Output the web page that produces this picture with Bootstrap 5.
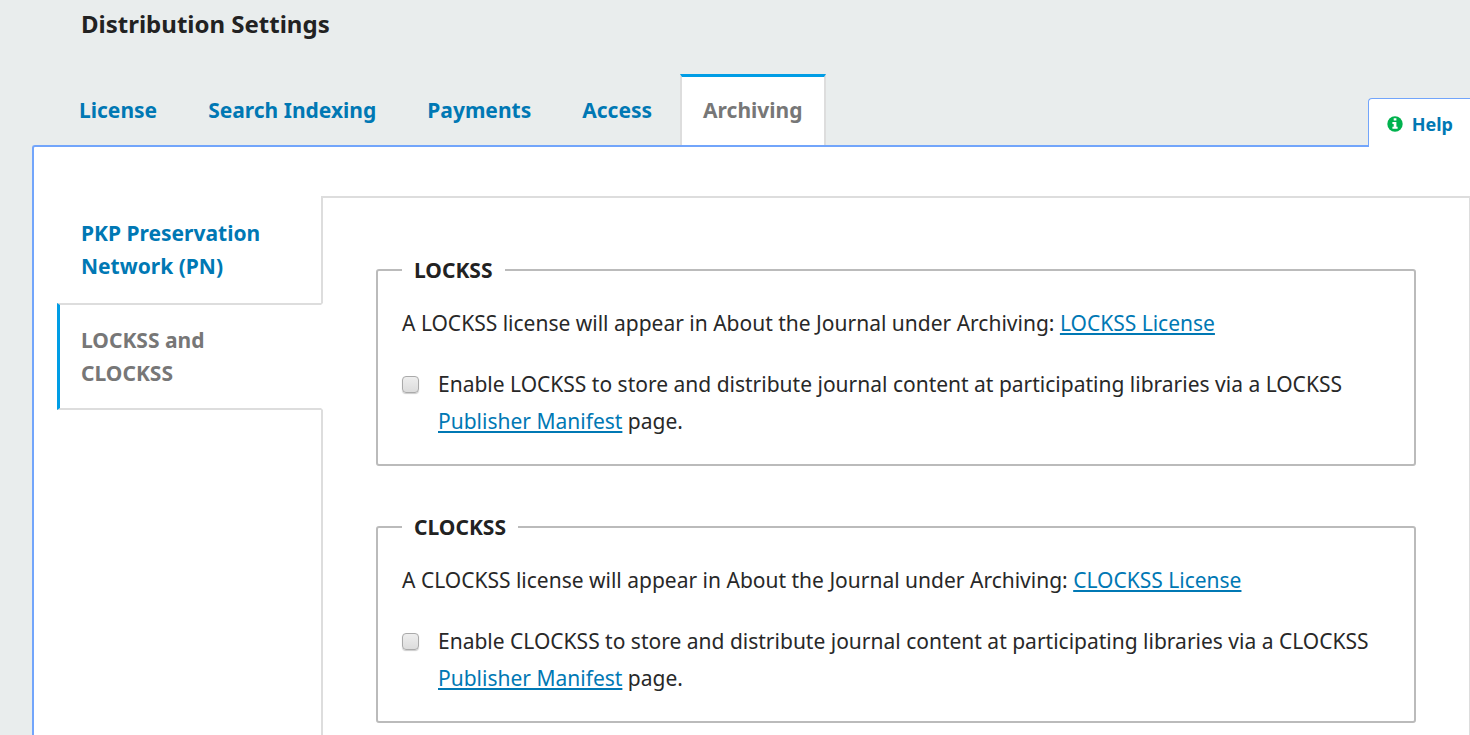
<!DOCTYPE html>
<html lang="en">
<head>
<meta charset="utf-8">
<meta name="viewport" content="width=device-width, initial-scale=1">
<title>Distribution Settings</title>
<link href="https://cdn.jsdelivr.net/npm/bootstrap@5.3.0/dist/css/bootstrap.min.css" rel="stylesheet">
<style>
  body { background: #e9eded; color: #282828; font-family: "Noto Sans", sans-serif; font-size: 21px; line-height: 37px; }
  a { color: #0078b4; text-decoration-thickness: 2px; text-underline-offset: 2px; }
  .page-title { color: #222; font-size: 24px; line-height: 32px; padding: 8px 0 0 81px; }
  .tab-row { padding: 34px 0 0 56px; }
  .tab-row .nav-tabs { --bs-nav-tabs-border-width: 0; gap: 5px; }
  .tab-row .nav-link { border: 2px solid transparent; border-top-width: 3px; border-bottom: 0; border-radius: 0; padding: 15px 21px 16px; margin: 0; font-weight: 700; color: #0078b4; }
  .tab-row .nav-link.active { background: #fff; border-color: #009de5 #ddd; color: #777; }
  .help-tab { background: #fff; border: 1px solid #72a5fb; border-width: 1px 0 0 1px; border-radius: 4px 0 0 0; color: #0078b4; font-size: 18px; line-height: 24px; font-weight: 700; padding: 13px 17px 11px; margin-bottom: -2px; z-index: 1; }
  .settings-panel { background: #fff; border: 2px solid #72a5fb; border-width: 2px 0 0 2px; border-top-left-radius: 3px; margin-left: 32px; padding: 49px 0 0 23px; }
  .side-tabs { width: 266px; flex: none; z-index: 1; }
  .side-tabs .nav-link { border: 2px solid transparent; border-left-width: 3px; border-right: 2px solid #ddd; border-radius: 0; color: #0078b4; font-weight: 700; line-height: 33px; padding: 19px 40px 18px 21px; }
  .side-tabs .nav-link.active { background: #fff; border-color: #ddd #fff #ddd #009de5; color: #777; }
  .archive-content { border: 2px solid #ddd; border-width: 2px 1px 0 2px; margin-left: -2px; padding: 56px 53px 8px; }
  .setting-group { border: 2px solid #bbb; border-radius: 3px; padding: 0 24px 24px; }
  .setting-group + .setting-group { margin-top: 45px; }
  .setting-group legend { color: #222; font-size: 21px; font-weight: 700; line-height: 32px; padding: 0 12px; margin-bottom: 19px; }
  .setting-group p { margin-bottom: 24px; }
  .enable-box { appearance: none; flex: none; width: 17px; height: 17px; margin: 10px 19px 0 0; border: 1px solid #aaa; border-radius: 4px; background: linear-gradient(#eee, #dcdcdc); box-shadow: 0 1px 1px #ccc; }
  .enable-box:checked { background: #0078b4; }
</style>
</head>
<body class="min-vh-100 d-flex flex-column">
<h1 class="page-title fw-bold m-0">Distribution Settings</h1>
<div class="tab-row d-flex justify-content-between align-items-end">
  <ul class="nav nav-tabs">
    <li class="nav-item"><a class="nav-link" href="#license">License</a></li>
    <li class="nav-item"><a class="nav-link" href="#indexing">Search Indexing</a></li>
    <li class="nav-item"><a class="nav-link" href="#payments">Payments</a></li>
    <li class="nav-item"><a class="nav-link" href="#access">Access</a></li>
    <li class="nav-item"><a class="nav-link active" aria-current="page" href="#archiving">Archiving</a></li>
  </ul>
  <button type="button" class="help-tab d-flex align-items-center position-relative">
    <svg class="me-2" width="18" height="16" viewBox="0 0 18 16" aria-hidden="true"><circle cx="9" cy="8" r="7.7" fill="#00b24e"/><path fill="#fff" d="M7.7 2.3h2.7v2.2H7.7zM6.4 6h4v4.8h1.2v1.9H6.4v-1.9h1.3V7.9H6.4z"/></svg>
    Help
  </button>
</div>
<main class="settings-panel d-flex flex-fill" id="archiving">
  <nav class="side-tabs nav flex-column position-relative" aria-label="Archiving">
    <a class="nav-link" href="#pn">PKP Preservation Network (PN)</a>
    <a class="nav-link active" href="#lockss">LOCKSS and CLOCKSS</a>
  </nav>
  <form class="archive-content flex-fill" id="lockss">
    <fieldset class="setting-group">
      <legend class="float-none w-auto">LOCKSS</legend>
      <p>A LOCKSS license will appear in About the Journal under Archiving: <a href="#lockss-license">LOCKSS License</a></p>
      <div class="d-flex align-items-start">
        <input class="enable-box" type="checkbox" id="enableLockss">
        <label for="enableLockss">Enable LOCKSS to store and distribute journal content at participating libraries via a LOCKSS <a href="#lockss-manifest">Publisher Manifest</a> page.</label>
      </div>
    </fieldset>
    <fieldset class="setting-group">
      <legend class="float-none w-auto">CLOCKSS</legend>
      <p>A CLOCKSS license will appear in About the Journal under Archiving: <a href="#clockss-license">CLOCKSS License</a></p>
      <div class="d-flex align-items-start">
        <input class="enable-box" type="checkbox" id="enableClockss">
        <label for="enableClockss">Enable CLOCKSS to store and distribute journal content at participating libraries via a CLOCKSS <a href="#clockss-manifest">Publisher Manifest</a> page.</label>
      </div>
    </fieldset>
  </form>
</main>
<script src="https://cdn.jsdelivr.net/npm/bootstrap@5.3.0/dist/js/bootstrap.bundle.min.js"></script>
</body>
</html>
